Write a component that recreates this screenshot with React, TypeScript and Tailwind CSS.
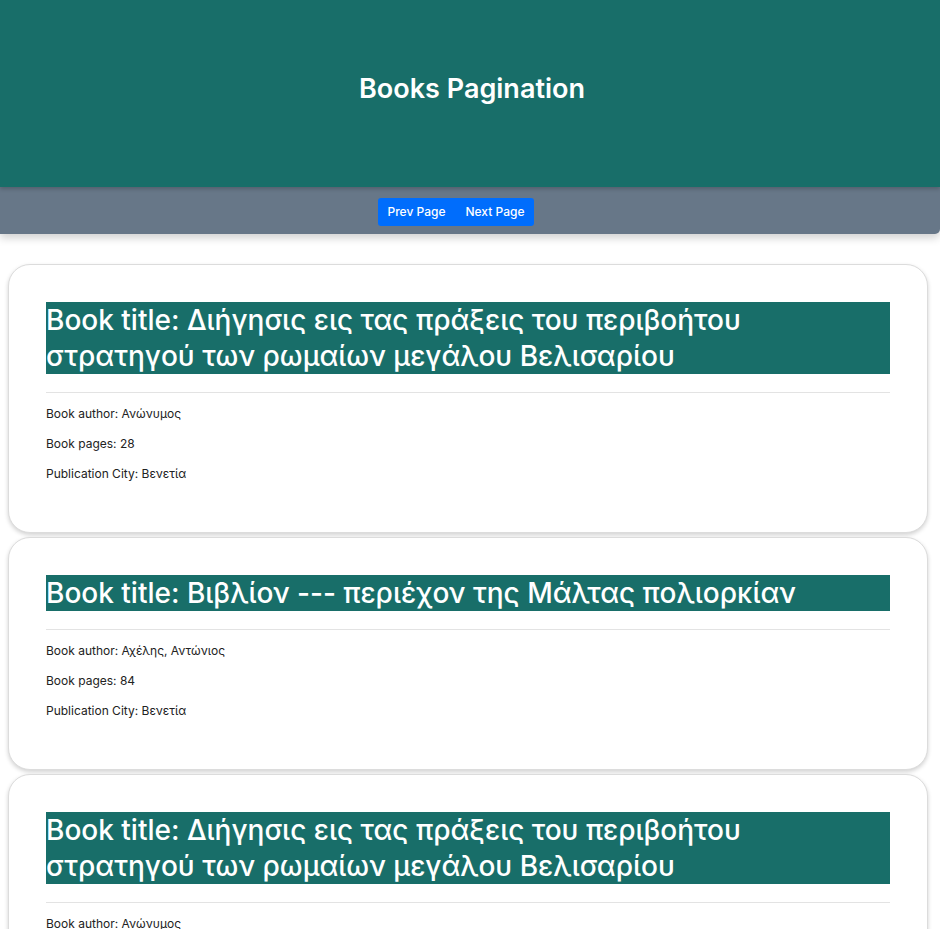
import React from 'react';

type Book = { title: string; author: string; pages: number; city: string };

const books: Book[] = [
  {
    title: 'Διήγησις εις τας πράξεις του περιβοήτου στρατηγού των ρωμαίων μεγάλου Βελισαρίου',
    author: 'Ανώνυμος',
    pages: 28,
    city: 'Βενετία',
  },
  {
    title: 'Βιβλίον --- περιέχον της Μάλτας πολιορκίαν',
    author: 'Αχέλης, Αντώνιος',
    pages: 84,
    city: 'Βενετία',
  },
  {
    title: 'Διήγησις εις τας πράξεις του περιβοήτου στρατηγού των ρωμαίων μεγάλου Βελισαρίου',
    author: 'Ανώνυμος',
    pages: 28,
    city: 'Βενετία',
  },
];

function BookCard({ book }: { book: Book }) {
  return (
    <div className="ml-2 mr-3 mb-[4px] rounded-[22px] border border-[#dcdcdc] bg-white px-[37px] pt-[37px] pb-[37px] shadow-[0_2px_4px_rgba(0,0,0,0.18)]">
      <h2 className="bg-[#186e69] text-[28px] font-medium leading-[36px] text-white">
        Book title: {book.title}
      </h2>
      <hr className="mt-[18px] mb-3 border-t border-[#e3e3e3]" />
      <p className="my-3 text-[12px] leading-[18px] text-[#222]">Book author: {book.author}</p>
      <p className="my-3 text-[12px] leading-[18px] text-[#222]">Book pages: {book.pages}</p>
      <p className="my-3 text-[12px] leading-[18px] text-[#222]">Publication City: {book.city}</p>
    </div>
  );
}

export default function App() {
  return (
    <div
      className="min-h-screen bg-white"
      style={{ fontFamily: 'Inter, "Noto Sans", "DejaVu Sans", sans-serif' }}
    >
      <header className="relative z-10 flex h-[187px] items-center justify-center bg-[#186e69] pb-[8px] pl-[4px] shadow-[0_2px_4px_rgba(0,0,0,0.2)]">
        <h1 className="text-[27px] font-semibold text-white">Books Pagination</h1>
      </header>
      <nav className="flex h-[47px] items-center justify-center rounded-br-[5px] bg-[#677788] pt-[2px] pr-[28px] shadow-[0_4px_8px_rgba(0,0,0,0.18)]">
        <button className="h-[28px] rounded-l-[3px] bg-[#006dfc] px-[10px] text-[12px] font-medium text-white">
          Prev Page
        </button>
        <button className="h-[28px] rounded-r-[3px] bg-[#006dfc] px-[10px] text-[12px] font-medium text-white">
          Next Page
        </button>
      </nav>
      <main className="pt-[30px]">
        {books.map((b, i) => (
          <BookCard key={i} book={b} />
        ))}
      </main>
    </div>
  );
}
